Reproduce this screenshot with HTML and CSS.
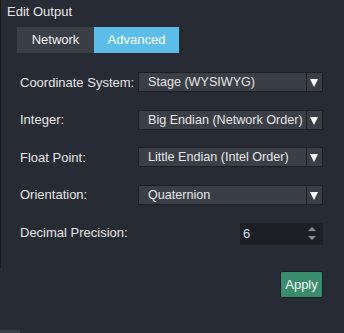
FILE: index.html
```html
<!DOCTYPE html>
<html>
<head>
<meta charset="utf-8" />
<title>Edit Output</title>
<link rel="stylesheet" href="styles.css">
</head>
<body>
<div class="panel">
	<div class="title">Edit Output</div>
	<div class="tabs">
		<div class="tab">Network</div>
		<div class="tab active">Advanced</div>
	</div>
	<div class="form">
		<div class="row">
			<span class="label">Coordinate System:</span>
			<div class="select"><span class="value">Stage (WYSIWYG)</span><span class="arrow"></span></div>
		</div>
		<div class="row">
			<span class="label">Integer:</span>
			<div class="select"><span class="value">Big Endian (Network Order)</span><span class="arrow"></span></div>
		</div>
		<div class="row">
			<span class="label">Float Point:</span>
			<div class="select"><span class="value">Little Endian (Intel Order)</span><span class="arrow"></span></div>
		</div>
		<div class="row">
			<span class="label">Orientation:</span>
			<div class="select"><span class="value">Quaternion</span><span class="arrow"></span></div>
		</div>
		<div class="row">
			<span class="label">Decimal Precision:</span>
			<div class="spin"><span class="num">6</span><span class="spin-btns"><i class="up"></i><i class="down"></i></span></div>
		</div>
	</div>
	<div class="actions">
		<button class="apply">Apply</button>
	</div>
</div>
<div class="corner"></div>
</body>
</html>
```

FILE: styles.css
```css
*{
	margin:0;
	padding:0;
	box-sizing:border-box;
}
body{
	width:344px;
	height:333px;
	overflow:hidden;
	background:#272b34;
	font-family:"Liberation Sans",Arial,sans-serif;
	font-size:13px;
	color:#e6e6e6;
	position:relative;
}
.panel{
	border-left:1px solid #15171b;
	margin-top:28px;
	height:268px;
}
.title{
	margin-top:-28px;
	padding:4px 0 0 6px;
	height:27px;
	line-height:16px;
}
.tabs{
	display:flex;
	margin-left:16px;
	height:26px;
}
.tab{
	width:77px;
	background:#3a3e47;
	text-align:center;
	line-height:26px;
	color:#f0f0f0;
}
.tab.active{
	width:85px;
	background:#5cbde9;
	color:#fff;
}
.form{
	padding:19px 21px 0 19px;
}
.row{
	display:flex;
	justify-content:space-between;
	align-items:center;
	height:20px;
	margin-bottom:17.5px;
}
.label{
	white-space:nowrap;
}
.select{
	width:185px;
	height:20px;
	display:flex;
	background:#3a3e47;
	border:1px solid #1c1f25;
}
.value{
	flex:1;
	padding-left:9px;
	line-height:18px;
	font-size:12.6px;
	white-space:nowrap;
}
.arrow{
	width:16px;
	border-left:1px solid #1c1f25;
	position:relative;
}
.arrow:after{
	content:"";
	position:absolute;
	left:3px;
	top:6px;
	border-left:4.5px solid transparent;
	border-right:4.5px solid transparent;
	border-top:8px solid #fff;
}
.spin{
	width:83px;
	height:22px;
	background:#1c1f25;
	display:flex;
	justify-content:space-between;
	align-items:center;
	padding:0 7px 0 3px;
	margin-top:3px;
}
.num{
	color:#cfe0f5;
}
.spin-btns{
	display:flex;
	flex-direction:column;
	gap:5px;
}
.spin-btns i{
	width:0;
	height:0;
	border-left:4px solid transparent;
	border-right:4px solid transparent;
}
.spin-btns .up{
	border-bottom:4px solid #8a8e96;
}
.spin-btns .down{
	border-top:4px solid #8a8e96;
}
.actions{
	display:flex;
	justify-content:flex-end;
	padding:11px 21px 0 0;
}
.apply{
	width:43px;
	height:27px;
	background:#3a8c6f;
	border:1px solid #1a1d22;
	border-radius:2px;
	color:#f4f4f4;
	font-family:inherit;
	font-size:13px;
}
.corner{
	position:absolute;
	left:0;
	bottom:0;
	width:20px;
	height:3px;
	background:#3a3e47;
}
```
